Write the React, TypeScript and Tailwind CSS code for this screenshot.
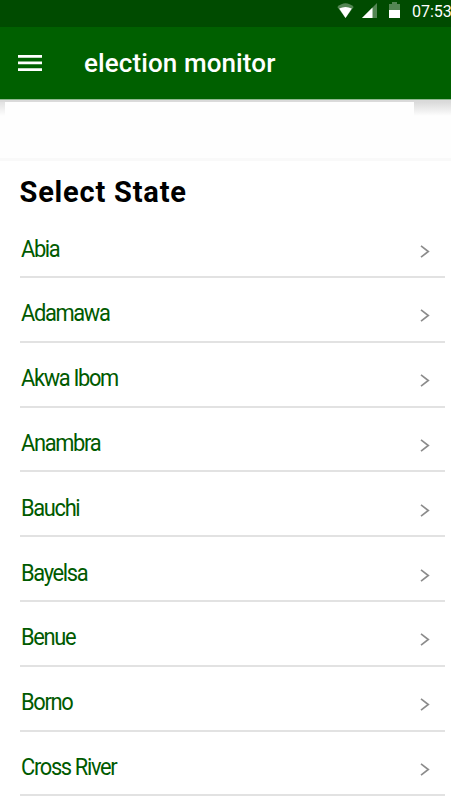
const states = ['Abia', 'Adamawa', 'Akwa Ibom', 'Anambra', 'Bauchi', 'Bayelsa', 'Benue', 'Borno', 'Cross River'];

function StatusBar() {
  return (
    <div className="flex h-[27px] items-start justify-end bg-[#004b00] text-white">
      <svg className="mt-[3px] mr-[8px]" width="17" height="16" viewBox="0 0 17 16" fill="currentColor">
        <path opacity=".33" d="M.3 4Q8.5-3.5 16.7 4L8.5 15Z" />
        <path d="M2.2 5.4Q8.5 2.4 14.8 5.4L8.5 15Z" />
      </svg>
      <svg className="mt-[3px] mr-[12px]" width="15" height="15" viewBox="0 0 15 15" fill="currentColor">
        <path opacity=".33" d="M15 0V15H0Z" />
        <path d="M10.5 4.5V15H0Z" />
      </svg>
      <svg className="mt-[2px] mr-[12px]" width="11" height="16" viewBox="0 0 11 16" fill="currentColor">
        <path opacity=".33" d="M0 2H3V0H8V2H11V8H0Z" />
        <path d="M0 8H11V16H0Z" />
      </svg>
      <span className="w-[39px] text-[16px] leading-[23px] whitespace-nowrap">07:53</span>
    </div>
  );
}

function AppBar() {
  return (
    <header className="flex h-[72px] items-center bg-[#006000] pl-[18px] text-white">
      <svg className="shrink-0" width="24" height="16" viewBox="0 0 24 16" fill="currentColor">
        <path d="M0 0H24V2.7H0ZM0 6.6H24V9.3H0ZM0 13.2H24V15.9H0Z" />
      </svg>
      <h1 className="ml-[42px] text-[26px] leading-[30px] font-medium tracking-[0.1px] whitespace-nowrap">election monitor</h1>
    </header>
  );
}

export default function App() {
  return (
    <main className="flex h-[800px] w-[451px] flex-col overflow-hidden bg-white font-[Roboto,sans-serif]">
      <StatusBar />
      <AppBar />
      <div className="h-px shrink-0 bg-[#90b890]" />
      <div className="h-[2px] shrink-0 bg-[#dadada]" />
      <div className="flex h-[56px] shrink-0 justify-between bg-[#fefefe]">
        <div className="h-[14px] w-[5px] bg-linear-to-b from-[#e2e2e2] to-[#fefefe]" />
        <div className="h-[14px] w-[37px] bg-linear-to-b from-[#dadada] to-[#fefefe]" />
      </div>
      <div className="h-[3px] shrink-0 bg-[#f9f9f9]" />
      <h2 className="h-[52.2px] shrink-0 pt-[13px] pl-[19.5px] text-[29px] leading-[36px] font-bold tracking-[0.8px] text-black">Select State</h2>
      <ul className="mr-[6px] ml-[20px]">
        {states.map((state) => (
          <li key={state} className="flex h-[64.8px] items-center justify-between border-b-2 border-[#e2e2e2] pr-[15px] pl-px">
            <span className="origin-left scale-x-[.95] pt-[10px] text-[23px] leading-[28px] tracking-[-1.4px] text-[#005a00]">{state}</span>
            <svg className="mt-[13px]" width="10" height="13" viewBox="0 0 10 13" fill="none" stroke="#8c8c8c" strokeWidth="1.7">
              <path d="M1 .8L8.3 6.5L1 12.2" />
            </svg>
          </li>
        ))}
      </ul>
    </main>
  );
}
